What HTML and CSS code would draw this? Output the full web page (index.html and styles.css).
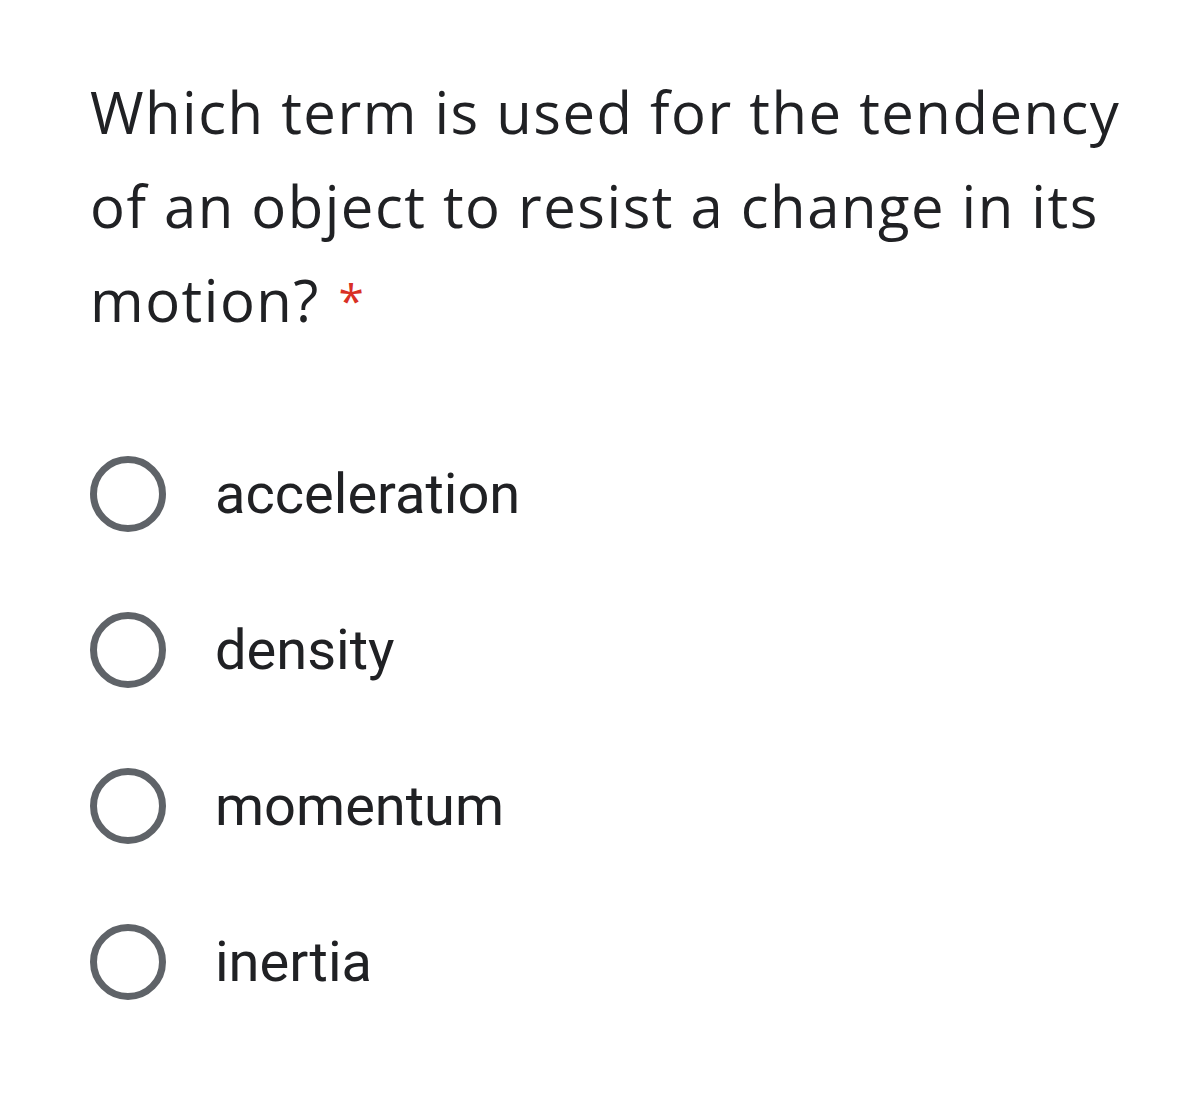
FILE: index.html
```html
<!DOCTYPE html>
<html>
<head>
<meta charset="utf-8">
<link rel="stylesheet" href="styles.css">
</head>
<body>
<div class="card">
  <div class="question">Which term is used for the tendency of an object to resist a change in its motion? <span class="req">*</span></div>
  <div class="options">
    <div class="option"><span class="radio"></span><span class="label">acceleration</span></div>
    <div class="option"><span class="radio"></span><span class="label">density</span></div>
    <div class="option"><span class="radio"></span><span class="label">momentum</span></div>
    <div class="option"><span class="radio"></span><span class="label">inertia</span></div>
  </div>
</div>
</body>
</html>
```
FILE: styles.css
```css
html, body {
  margin: 0;
  padding: 0;
  background: #ffffff;
}
.card {
  padding: 65px 40px 0 90px;
}
.question {
  font-family: "Open Sans", "Liberation Sans", sans-serif;
  font-size: 58px;
  letter-spacing: 1.5px;
  line-height: 94px;
  color: #202124;
  width: 1070px;
}
.req {
  color: #d93025;
  font-size: 46px;
  letter-spacing: 0;
  vertical-align: 4px;
  margin-left: 2px;
}
.options {
  margin-top: 108px;
  display: flex;
  flex-direction: column;
  gap: 78px;
}
.option {
  display: flex;
  align-items: center;
  height: 78px;
}
.radio {
  box-sizing: border-box;
  width: 76px;
  height: 76px;
  border: 7px solid #5f6368;
  border-radius: 50%;
  flex: none;
}
.label {
  margin-left: 49px;
  font-family: Roboto, "Liberation Sans", sans-serif;
  font-size: 56px;
  color: #202124;
}
```
